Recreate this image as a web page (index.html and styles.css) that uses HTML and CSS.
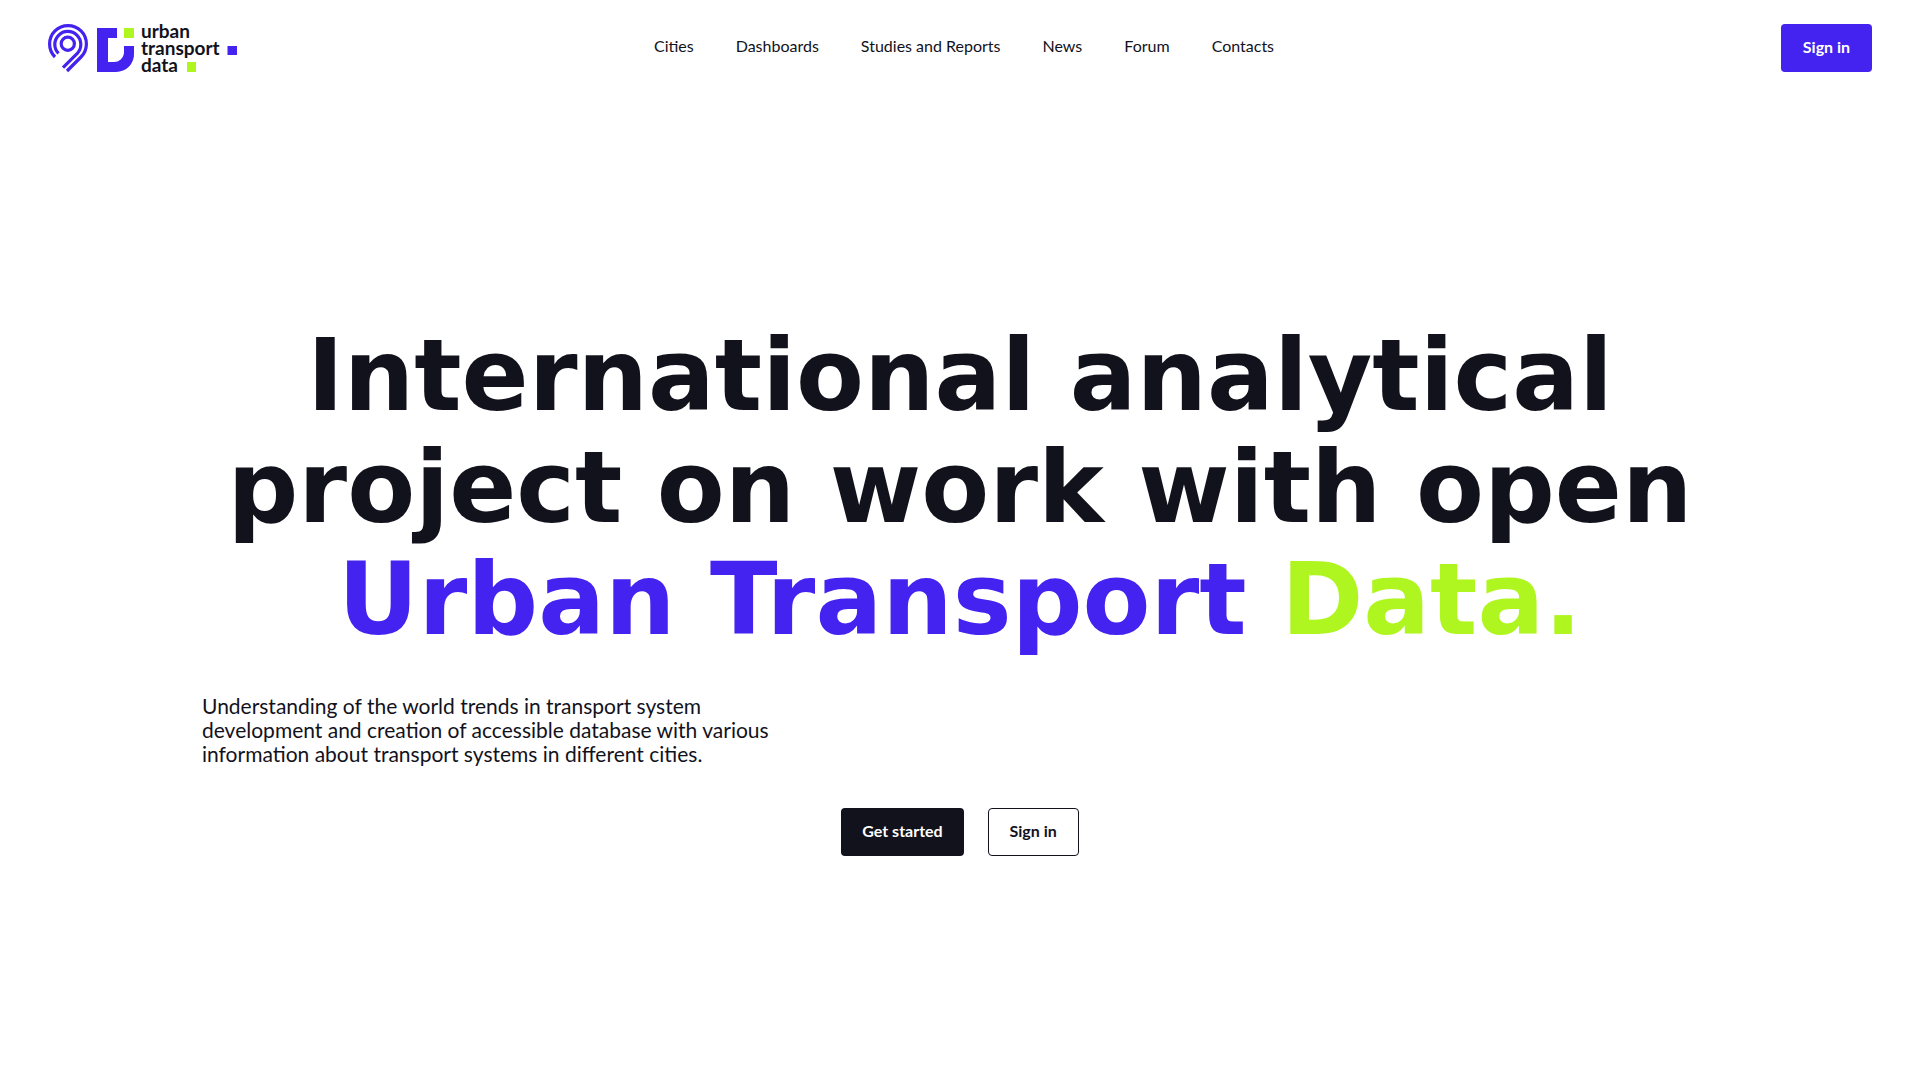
FILE: index.html
```html
<!DOCTYPE html>
<html lang="en">
<head>
<meta charset="utf-8">
<meta name="viewport" content="width=device-width, initial-scale=1">
<title>Urban Transport Data</title>
<link rel="stylesheet" href="styles.css">
</head>
<body>
<header class="header">
  <a class="logo" href="#" aria-label="urban transport data">
    <svg class="logo-art" viewBox="48 24 189 48" width="189" height="48" aria-hidden="true">
      <g fill="none" stroke="#4422f0" stroke-width="3.2">
        <circle cx="67.8" cy="43.8" r="6.6"/>
        <path d="M58.5 53.5A13 13 0 1 1 77.3 53.3L63 67.6"/>
        <path d="M55 57A18.4 18.4 0 1 1 81 57L67 71"/>
      </g>
      <path fill="#4422f0" d="M97 28h20v10h-9v24h5a10 10 0 0 0 11-10v-6h10v7a18 18 0 0 1-18 19H97zM227.500 46h9.500v9h-9.500z"/>
      <path fill="#aff51f" d="M124 28h10v10h-10zM187 62h9v10h-9z"/>
      <g class="logo-text">
        <text x="141" y="38">urban</text>
        <text x="141" y="55">transport</text>
        <text x="141" y="72">data</text>
      </g>
    </svg>
  </a>
  <nav class="nav" aria-label="Main">
    <a href="#">Cities</a>
    <a href="#">Dashboards</a>
    <a href="#">Studies and Reports</a>
    <a href="#">News</a>
    <a href="#">Forum</a>
    <a href="#">Contacts</a>
  </nav>
  <button class="button button-accent" type="button">Sign in</button>
</header>
<main class="hero">
  <h1 class="title">International analytical project on work with open <span class="accent">Urban Transport</span> <span class="lime">Data.</span></h1>
  <p class="lead">Understanding of the world trends in transport system development and creation of accessible database with various information about transport systems in different cities.</p>
  <div class="actions">
    <button class="button button-dark" type="button">Get started</button>
    <button class="button button-outline" type="button">Sign in</button>
  </div>
</main>
</body>
</html>
```
FILE: styles.css
```css
* { box-sizing: border-box; }
body {
  margin: 0;
  min-height: 100vh;
  display: flex;
  flex-direction: column;
  background: #fff;
  color: #12121c;
  font-family: Lato, sans-serif;
  font-size: 16px;
  line-height: 24px;
}
.header {
  display: grid;
  grid-template-columns: 1fr auto 1fr;
  align-items: center;
  padding: 24px 48px;
}
.logo { display: block; justify-self: start; }
.logo-art { display: block; overflow: visible; }
.logo-text { font-size: 19px; font-weight: 700; fill: #12121c; }
.nav { display: flex; flex-wrap: wrap; gap: 8px 42px; padding: 0 0 4px 8px; }
.nav a { color: inherit; text-decoration: none; }
.button {
  height: 48px;
  min-width: 91px;
  padding: 0 20px 2px;
  border: 1px solid transparent;
  border-radius: 4px;
  font: inherit;
  font-weight: 700;
  cursor: pointer;
}
.button-accent { justify-self: end; background: #4422f0; color: #fff; }
.button-dark { background: #12121c; color: #fff; }
.button-outline { background: #fff; border-color: #12121c; color: inherit; }
.hero {
  flex: 1;
  display: flex;
  flex-direction: column;
  justify-content: center;
  width: 100%;
  max-width: 1516px;
  margin: 0 auto;
}
.title {
  margin: 0 0 38px;
  font-family: "DejaVu Sans", sans-serif;
  font-size: 99px;
  line-height: 112px;
  font-weight: 700;
  text-align: center;
}
.accent { color: #4422f0; }
.lime { color: #aff51f; }
.lead { margin: 0 0 42px; max-width: 600px; font-size: 21px; }
.actions { display: flex; justify-content: center; gap: 24px; }
```
